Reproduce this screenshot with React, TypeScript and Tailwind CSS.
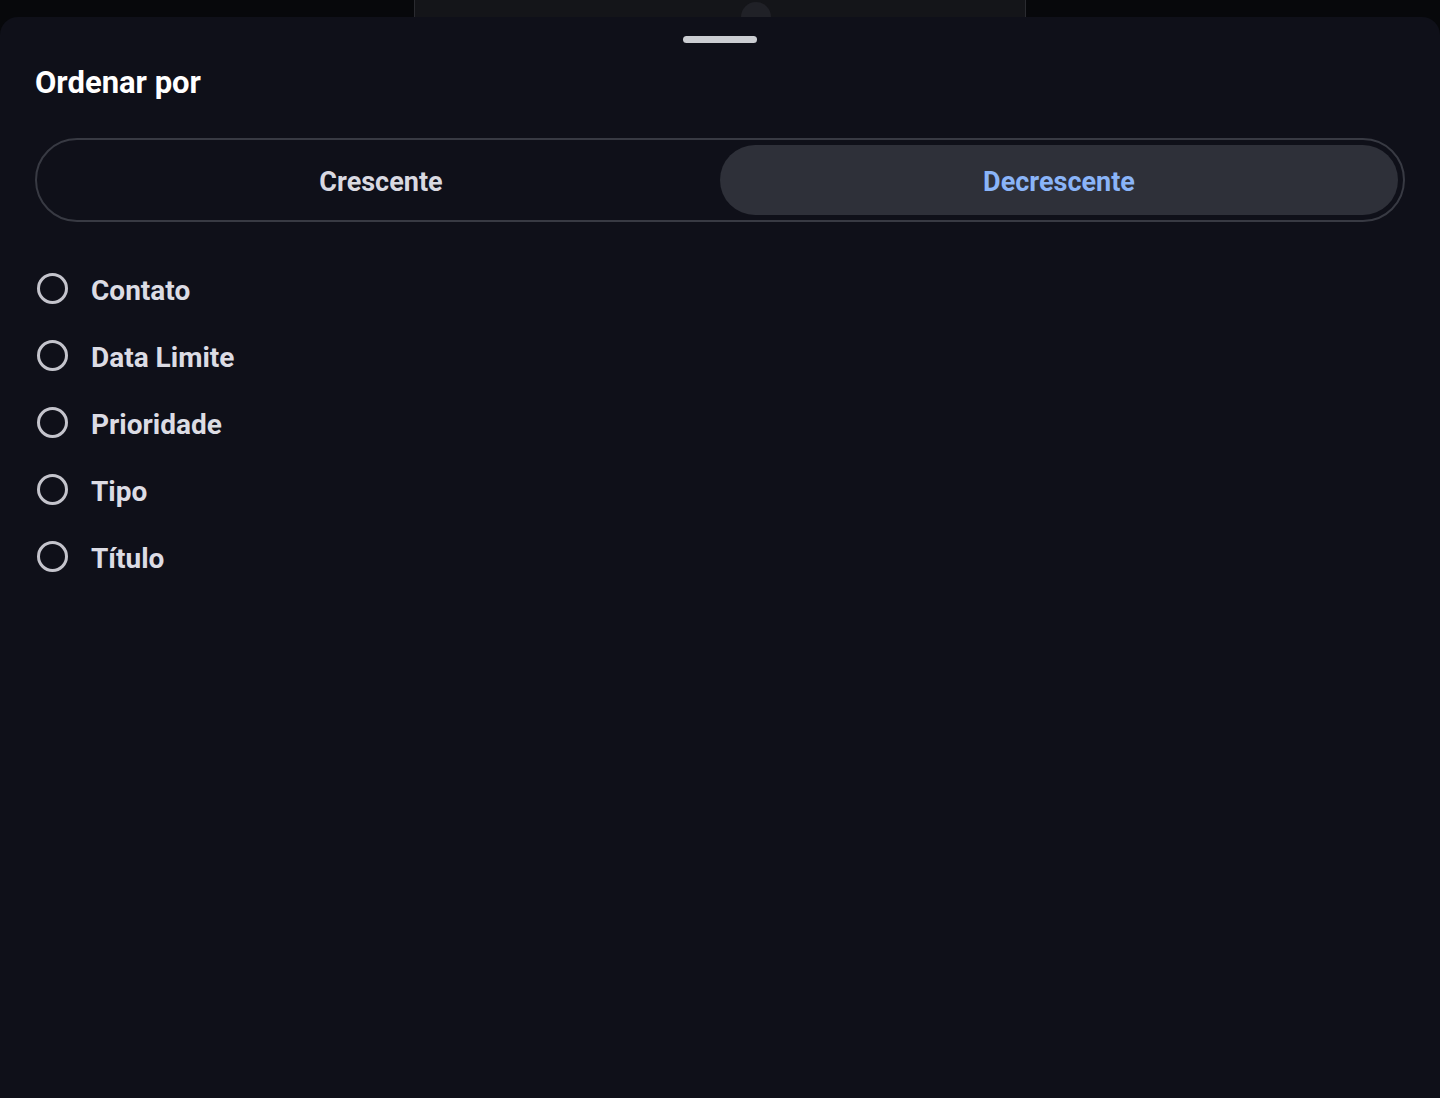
import { useState } from 'react';

const fields = ['Contato', 'Data Limite', 'Prioridade', 'Tipo', 'Título'];

export default function App() {
  const [order, setOrder] = useState<'asc' | 'desc'>('desc');
  const [field, setField] = useState<string | null>(null);

  return (
    <div
      className="relative h-[1098px] w-[1440px] overflow-hidden bg-[#07080b]"
      style={{ fontFamily: 'Roboto, "Noto Sans", sans-serif' }}
    >
      {/* app behind the sheet */}
      <div className="absolute left-[414px] top-0 h-[40px] w-[612px] border-x border-[#2a2b30] bg-[#141519]">
        <div className="absolute left-[326px] top-[2px] h-[30px] w-[30px] rounded-full bg-[#202127]" />
      </div>

      <div className="absolute inset-x-0 bottom-0 top-[17px] flex flex-col rounded-t-[18px] bg-[#0f1019]">
        <div className="flex justify-center pt-[19px]">
          <div className="h-[7px] w-[74px] rounded-full bg-[#cbcdd2]" />
        </div>

        <h2 className="ml-[35px] mt-[20px] text-[31px] font-bold leading-[40px] text-white">Ordenar por</h2>

        <div className="mx-[35px] mt-[35px] flex h-[84px] rounded-full border-2 border-[#383a43] p-[5px]">
          <button
            onClick={() => setOrder('asc')}
            className={`flex-1 rounded-full pt-[4px] text-[27px] font-bold ${order === 'asc' ? 'bg-[#2e3039] text-[#8ab4f8]' : 'text-[#d9d9e1]'}`}
          >
            Crescente
          </button>
          <button
            onClick={() => setOrder('desc')}
            className={`flex-1 rounded-full pt-[4px] text-[27px] font-bold ${order === 'desc' ? 'bg-[#2e3039] text-[#8ab4f8]' : 'text-[#d9d9e1]'}`}
          >
            Decrescente
          </button>
        </div>

        <div className="mt-[33px] flex flex-col">
          {fields.map((f) => (
            <button
              key={f}
              onClick={() => setField(f)}
              className="flex h-[67px] items-center gap-[23px] pl-[37px] text-left"
            >
              <span className="flex h-[31px] w-[31px] items-center justify-center rounded-full border-[3px] border-[#c4c4cc]">
                {field === f && <span className="h-[15px] w-[15px] rounded-full bg-[#8ab4f8]" />}
              </span>
              <span className="pt-[4px] text-[28px] font-bold text-[#dcdce4]">{f}</span>
            </button>
          ))}
        </div>
      </div>
    </div>
  );
}
